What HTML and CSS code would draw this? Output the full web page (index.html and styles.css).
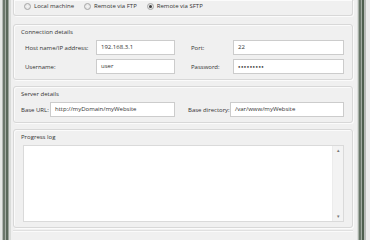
FILE: index.html
```html
<!DOCTYPE html>
<html>
<head>
    <title>Deploy settings</title>
    <link rel="stylesheet" href="styles.css">
</head>
<body>
    <div class="window">
        <div class="frame frame-left"></div>
        <div class="content">
            <div class="group group-mode">
                <label class="radio"><span class="dot"></span>Local machine</label>
                <label class="radio"><span class="dot"></span>Remote via FTP</label>
                <label class="radio"><span class="dot checked"></span>Remote via SFTP</label>
            </div>

            <div class="group">
                <div class="group-title">Connection details</div>
                <div class="fields fields-conn">
                    <span class="label">Host name/IP address:</span>
                    <span class="input">192.168.3.1</span>
                    <span class="label label-right">Port:</span>
                    <span class="input">22</span>
                    <span class="label">Username:</span>
                    <span class="input">user</span>
                    <span class="label label-right">Password:</span>
                    <span class="input password">&#9679;&#9679;&#9679;&#9679;&#9679;&#9679;&#9679;&#9679;&#9679;</span>
                </div>
            </div>

            <div class="group">
                <div class="group-title">Server details</div>
                <div class="fields fields-server">
                    <span class="label">Base URL:</span>
                    <span class="input">http://myDomain/myWebsite</span>
                    <span class="label label-right">Base directory:</span>
                    <span class="input">/var/www/myWebsite</span>
                </div>
            </div>

            <div class="group group-log">
                <div class="group-title">Progress log</div>
                <div class="log">
                    <div class="log-text"></div>
                    <div class="scrollbar">
                        <span class="arrow">&#9652;</span>
                        <span class="arrow">&#9662;</span>
                    </div>
                </div>
            </div>
            <div class="footer-line"></div>
        </div>
        <div class="frame frame-right"></div>
    </div>
</body>
</html>
```

FILE: styles.css
```css
html, body {
    margin: 0;
    padding: 0;
}
body {
    width: 370px;
    height: 240px;
    overflow: hidden;
    background: #f0f0f0;
    font-family: 'Open Sans', 'Noto Sans', sans-serif;
    font-size: 6px;
    color: #333;
}
.window {
    display: flex;
    height: 240px;
}
.frame {
    flex: none;
}
.frame-left {
    width: 11px;
    background: linear-gradient(to right,
        #e6e8e6 0, #e6e8e6 2px,
        #b4b8b4 2px, #b4b8b4 3px,
        #6c786c 3px, #6c786c 5px,
        #a4aca4 5px, #a4aca4 6px,
        #5a685a 6px, #5a685a 8px,
        #9ca49c 8px, #9ca49c 9px,
        #dadcda 9px, #dadcda 11px);
}
.frame-right {
    width: 13px;
    background: linear-gradient(to right,
        #dcdedc 0, #dcdedc 1px,
        #a8b0a8 1px, #a8b0a8 2px,
        #687668 2px, #687668 4px,
        #a0aaa0 4px, #a0aaa0 5px,
        #4e5e4e 5px, #4e5e4e 7px,
        #b8bcb8 7px, #b8bcb8 9px,
        #ececec 9px, #ececec 13px);
}
.content {
    flex: 1;
    display: flex;
    flex-direction: column;
    gap: 6px;
    padding: 0 4px 0 2px;
}
.group {
    border: 1px solid #d8d8d8;
    border-radius: 3px;
    box-shadow: inset 1px 1px 0 #fbfbfb, 1px 1px 0 #fbfbfb;
    padding: 2px 8px 5px 7px;
    white-space: nowrap;
}
.group-mode {
    border-top: none;
    border-radius: 0 0 3px 3px;
    margin-bottom: 2px;
    padding: 1px 0 4px 10px;
    display: flex;
    gap: 10px;
}
.radio {
    display: flex;
    align-items: center;
    gap: 3px;
    height: 10px;
}
.dot {
    width: 5px;
    height: 5px;
    border: 1px solid #a6a6a6;
    border-radius: 50%;
    background: radial-gradient(circle, #f4f4f4 0, #dcdcdc 100%);
    position: relative;
}
.dot.checked::after {
    content: '';
    position: absolute;
    left: 1px;
    top: 1px;
    width: 3px;
    height: 3px;
    border-radius: 50%;
    background: #3c3c3c;
}
.group-title {
    height: 9px;
    line-height: 9px;
    margin-top: 1px;
    margin-bottom: 3px;
}
.fields {
    display: grid;
    row-gap: 4px;
    align-items: center;
}
.fields-conn {
    grid-template-columns: 71px 79px 58px 111px;
    padding-left: 4px;
}
.fields-server {
    grid-template-columns: 29px 125px 55px 114px;
}
.label-right {
    padding-left: 16px;
}
.fields-server .label-right {
    padding-left: 13px;
}
.input {
    height: 13px;
    line-height: 13px;
    border: 1px solid #cccccc;
    background: #fff;
    padding-left: 4px;
    overflow: hidden;
}
.password {
    font-size: 4px;
    letter-spacing: 0.5px;
}
.group-log {
    padding-bottom: 5px;
}
.log {
    display: flex;
    height: 75px;
    margin-left: 2px;
    border: 1px solid #dadada;
    background: #fff;
}
.log-text {
    flex: 1;
}
.scrollbar {
    width: 10px;
    background: #f3f3f3;
    border-left: 1px solid #ececec;
    display: flex;
    flex-direction: column;
    justify-content: space-between;
    align-items: center;
    color: #777;
    font-size: 5px;
    line-height: 7px;
    padding: 1px 0;
}
.footer-line {
    border-top: 1px solid #e0e0e0;
    margin-top: -4px;
    box-shadow: 0 1px 0 #fafafa;
}
```
